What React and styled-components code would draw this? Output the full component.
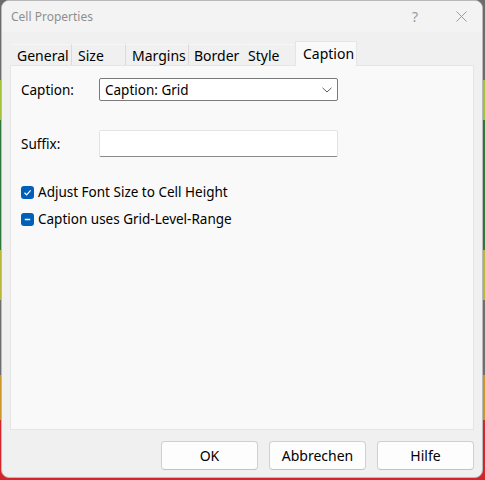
import { createGlobalStyle, styled } from 'styled-components'

const GlobalStyle = createGlobalStyle`
    html, body {
        margin: 0;
        padding: 0;
    }
    body {
        width: 485px;
        height: 480px;
        overflow: hidden;
        font-family: "Noto Sans", "Liberation Sans", sans-serif;
        /* desktop behind the dialog */
        background: linear-gradient(
            to bottom,
            #6c6c6c 0px, #6c6c6c 80px,
            #a4c13a 80px, #a4c13a 120px,
            #2f7a3a 120px, #2f7a3a 250px,
            #b7b83a 250px, #b7b83a 300px,
            #6e6e6e 300px, #6e6e6e 375px,
            #c9962a 375px, #c9962a 420px,
            #d3262a 420px, #d3262a 480px
        );
    }
`

const Window = styled.div`
    margin-left: 1px;
    width: 482px;
    height: 478px;
    box-sizing: border-box;
    border: 1px solid #b9b9b9;
    border-radius: 8px;
    background: #f0f0f0;
    overflow: hidden;
    display: flex;
    flex-direction: column;
`

const TitleBar = styled.div`
    height: 31px;
    flex: none;
    display: flex;
    align-items: center;
    background: #f3f3f3;
    padding-left: 9px;
    color: #8f8f8f;
    font-size: 12px;
`

const TitleText = styled.span`
    flex: 1;
`

const TitleButton = styled.span`
    width: ${p => p.$w}px;
    height: 31px;
    display: flex;
    align-items: center;
    justify-content: center;
    color: #9a9a9a;
    font-size: 14px;
    svg {
        display: block;
    }
`

const Body = styled.div`
    flex: 1;
    display: flex;
    flex-direction: column;
    padding: 9px 8px 0 8px;
`

const TabStrip = styled.div`
    display: flex;
    align-items: flex-end;
    height: 24px;
    padding-left: 2px;
    position: relative;
    z-index: 1;
`

const Tab = styled.div`
    box-sizing: border-box;
    width: ${p => p.$w}px;
    height: ${p => (p.$active ? 25 : 21)}px;
    margin-bottom: ${p => (p.$active ? -1 : 0)}px;
    padding-left: ${p => p.$pad}px;
    font-size: 14px;
    color: #000;
    display: flex;
    align-items: ${p => (p.$active ? 'flex-start' : 'center')};
    padding-top: ${p => (p.$active ? 2 : 0)}px;
    background: ${p => (p.$active ? '#f9f9f9' : '#f0f0f0')};
    border-top: 1px solid ${p => (p.$active ? '#e5e5e5' : '#f7f7f7')};
    border-left: 1px solid ${p => (p.$active ? '#e5e5e5' : p.$sep ? '#dadada' : 'transparent')};
    border-right: 1px solid ${p => (p.$active ? '#e5e5e5' : 'transparent')};
`

const Panel = styled.div`
    box-sizing: border-box;
    width: 464px;
    height: 365px;
    background: #f9f9f9;
    border: 1px solid #e5e5e5;
    padding: 12px 0 0 10px;
    display: flex;
    flex-direction: column;
`

const FieldRow = styled.div`
    display: flex;
    align-items: center;
    margin-bottom: ${p => p.$gap}px;
`

const Label = styled.span`
    width: 78px;
    font-size: 13.5px;
    color: #000;
`

const Select = styled.div`
    box-sizing: border-box;
    width: 239px;
    height: 23px;
    background: #fff;
    border: 1px solid #7a7a7a;
    border-radius: 2px;
    display: flex;
    align-items: center;
    justify-content: space-between;
    padding: 0 5px 0 5px;
    font-size: 13.5px;
    color: #000;
`

const TextBox = styled.div`
    box-sizing: border-box;
    width: 239px;
    height: 27px;
    background: #fff;
    border: 1px solid #e3e3e3;
    border-bottom-color: #8a8a8a;
    border-radius: 2px;
`

const CheckRow = styled.label`
    display: flex;
    align-items: center;
    gap: 4px;
    font-size: 13.5px;
    color: #000;
    height: 20px;
    margin-bottom: 7px;
`

const Box = styled.span`
    width: 13px;
    height: 13px;
    border-radius: 3px;
    background: #005fb8;
    display: flex;
    align-items: center;
    justify-content: center;
    svg {
        display: block;
    }
`

const Footer = styled.div`
    flex: 1;
    display: flex;
    justify-content: flex-end;
    align-items: flex-start;
    gap: 11px;
    padding: 11px 0 0 0;
`

const Button = styled.button`
    box-sizing: border-box;
    width: 97px;
    height: 29px;
    background: #fdfdfd;
    border: 1px solid #d0d0d0;
    border-bottom-color: #c2c2c2;
    border-radius: 4px;
    font-family: inherit;
    font-size: 14px;
    color: #000;
    padding: 0;
`

const tabs = [
    { name: 'General', w: 59, pad: 4 },
    { name: 'Size', w: 54, pad: 6, sep: true },
    { name: 'Margins', w: 63, pad: 6, sep: true },
    { name: 'Border', w: 53, pad: 5, sep: true },
    { name: 'Style', w: 54, pad: 6 },
    { name: 'Caption', w: 62, pad: 7, active: true },
]

const Check = () => (
    <svg width="9" height="9" viewBox="0 0 9 9">
        <path d="M1.5 4.8 L3.6 6.8 L7.6 2.3" fill="none" stroke="#fff" strokeWidth="1.2" />
    </svg>
)

const Dash = () => (
    <svg width="9" height="9" viewBox="0 0 9 9">
        <path d="M1.8 4.5 H7.2" stroke="#fff" strokeWidth="1.4" />
    </svg>
)

const App = () => {
    return (
        <>
            <GlobalStyle />
            <Window>
                <TitleBar>
                    <TitleText>Cell Properties</TitleText>
                    <TitleButton $w={50}>?</TitleButton>
                    <TitleButton $w={42}>
                        <svg width="11" height="11" viewBox="0 0 11 11">
                            <path d="M0.5 0.5 L10.5 10.5 M10.5 0.5 L0.5 10.5" stroke="#9a9a9a" strokeWidth="1" />
                        </svg>
                    </TitleButton>
                </TitleBar>
                <Body>
                    <TabStrip>
                        {tabs.map(t => (
                            <Tab key={t.name} $w={t.w} $pad={t.pad} $sep={t.sep} $active={t.active}>
                                {t.name}
                            </Tab>
                        ))}
                    </TabStrip>
                    <Panel>
                        <FieldRow $gap={29}>
                            <Label>Caption:</Label>
                            <Select>
                                <span>Caption: Grid</span>
                                <svg width="10" height="6" viewBox="0 0 10 6">
                                    <path d="M0.5 0.8 L5 5 L9.5 0.8" fill="none" stroke="#606060" strokeWidth="1" />
                                </svg>
                            </Select>
                        </FieldRow>
                        <FieldRow $gap={25}>
                            <Label>Suffix:</Label>
                            <TextBox />
                        </FieldRow>
                        <CheckRow>
                            <Box><Check /></Box>
                            Adjust Font Size to Cell Height
                        </CheckRow>
                        <CheckRow>
                            <Box><Dash /></Box>
                            Caption uses Grid-Level-Range
                        </CheckRow>
                    </Panel>
                    <Footer>
                        <Button>OK</Button>
                        <Button>Abbrechen</Button>
                        <Button>Hilfe</Button>
                    </Footer>
                </Body>
            </Window>
        </>
    )
}

export default App
